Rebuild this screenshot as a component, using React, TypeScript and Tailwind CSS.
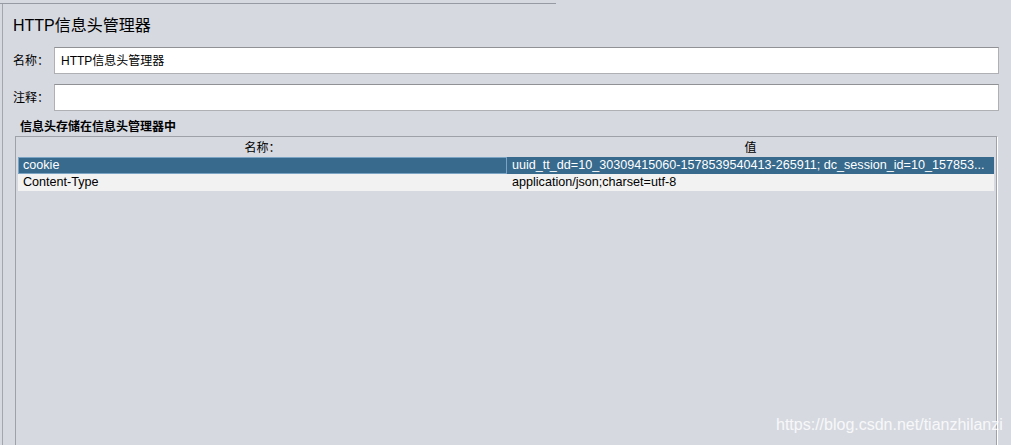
export default function App() {
  const font = { fontFamily: '"Liberation Sans", "Noto Sans CJK SC", sans-serif' };
  return (
    <div
      className="relative w-[1011px] h-[445px] overflow-hidden bg-[#d6d9e0] text-[12px] text-black"
      style={font}
    >
      {/* top tab line */}
      <div className="h-[3px]" />
      <div className="w-[556px] h-px bg-[#969aa2]" />

      <div className="ml-[2px] h-[441px] border-l border-[#a2a6ad] pl-[10px] pr-[12px]">
        {/* title */}
        <div className="pt-[12px] h-[43px] text-[16px] leading-[20px]">HTTP信息头管理器</div>

        {/* name */}
        <div className="flex items-center h-[27px]">
          <div className="w-[41px]">名称：</div>
          <div className="flex-1 h-[27px] bg-white border border-[#aeb0b3] border-t-[#8f9195] flex items-center pl-[6px]">
            HTTP信息头管理器
          </div>
        </div>

        {/* comment */}
        <div className="flex items-center h-[27px] mt-[10px]">
          <div className="w-[41px]">注释：</div>
          <div className="flex-1 h-[27px] bg-white border border-[#aeb0b3] border-t-[#8f9195]" />
        </div>

        {/* section */}
        <div className="pl-[7px] pt-[8px] h-[25px] font-bold leading-[16px]">信息头存储在信息头管理器中</div>

        <div className="ml-[2px] mr-[2px] h-[320px] border border-[#9ea2a8] shadow-[1px_1px_0_#ffffff] px-[2px] pt-[3px] text-[12.6px]">
          {/* header */}
          <div className="flex h-[17px] leading-[17px] text-[12px]">
            <div className="w-[489px] text-center">名称：</div>
            <div className="flex-1 text-center">值</div>
          </div>
          {/* rows */}
          <div className="flex h-[17px] leading-[15px] bg-[#376a8c] text-white">
            <div className="w-[489px] border border-[#7aa3c4] pl-[4px]">cookie</div>
            <div className="flex-1 pl-[5px] pt-px whitespace-nowrap overflow-hidden">
              uuid_tt_dd=10_30309415060-1578539540413-265911; dc_session_id=10_157853...
            </div>
          </div>
          <div className="flex h-[17px] leading-[17px] bg-[#f2f2f2]">
            <div className="w-[489px] pl-[5px]">Content-Type</div>
            <div className="flex-1 pl-[5px]">application/json;charset=utf-8</div>
          </div>
        </div>
      </div>

      {/* watermark */}
      <div className="absolute left-[776px] top-[414px] text-[16px] leading-[22px] text-white/80">
        https://blog.csdn.net/tianzhilanzi
      </div>
    </div>
  );
}
